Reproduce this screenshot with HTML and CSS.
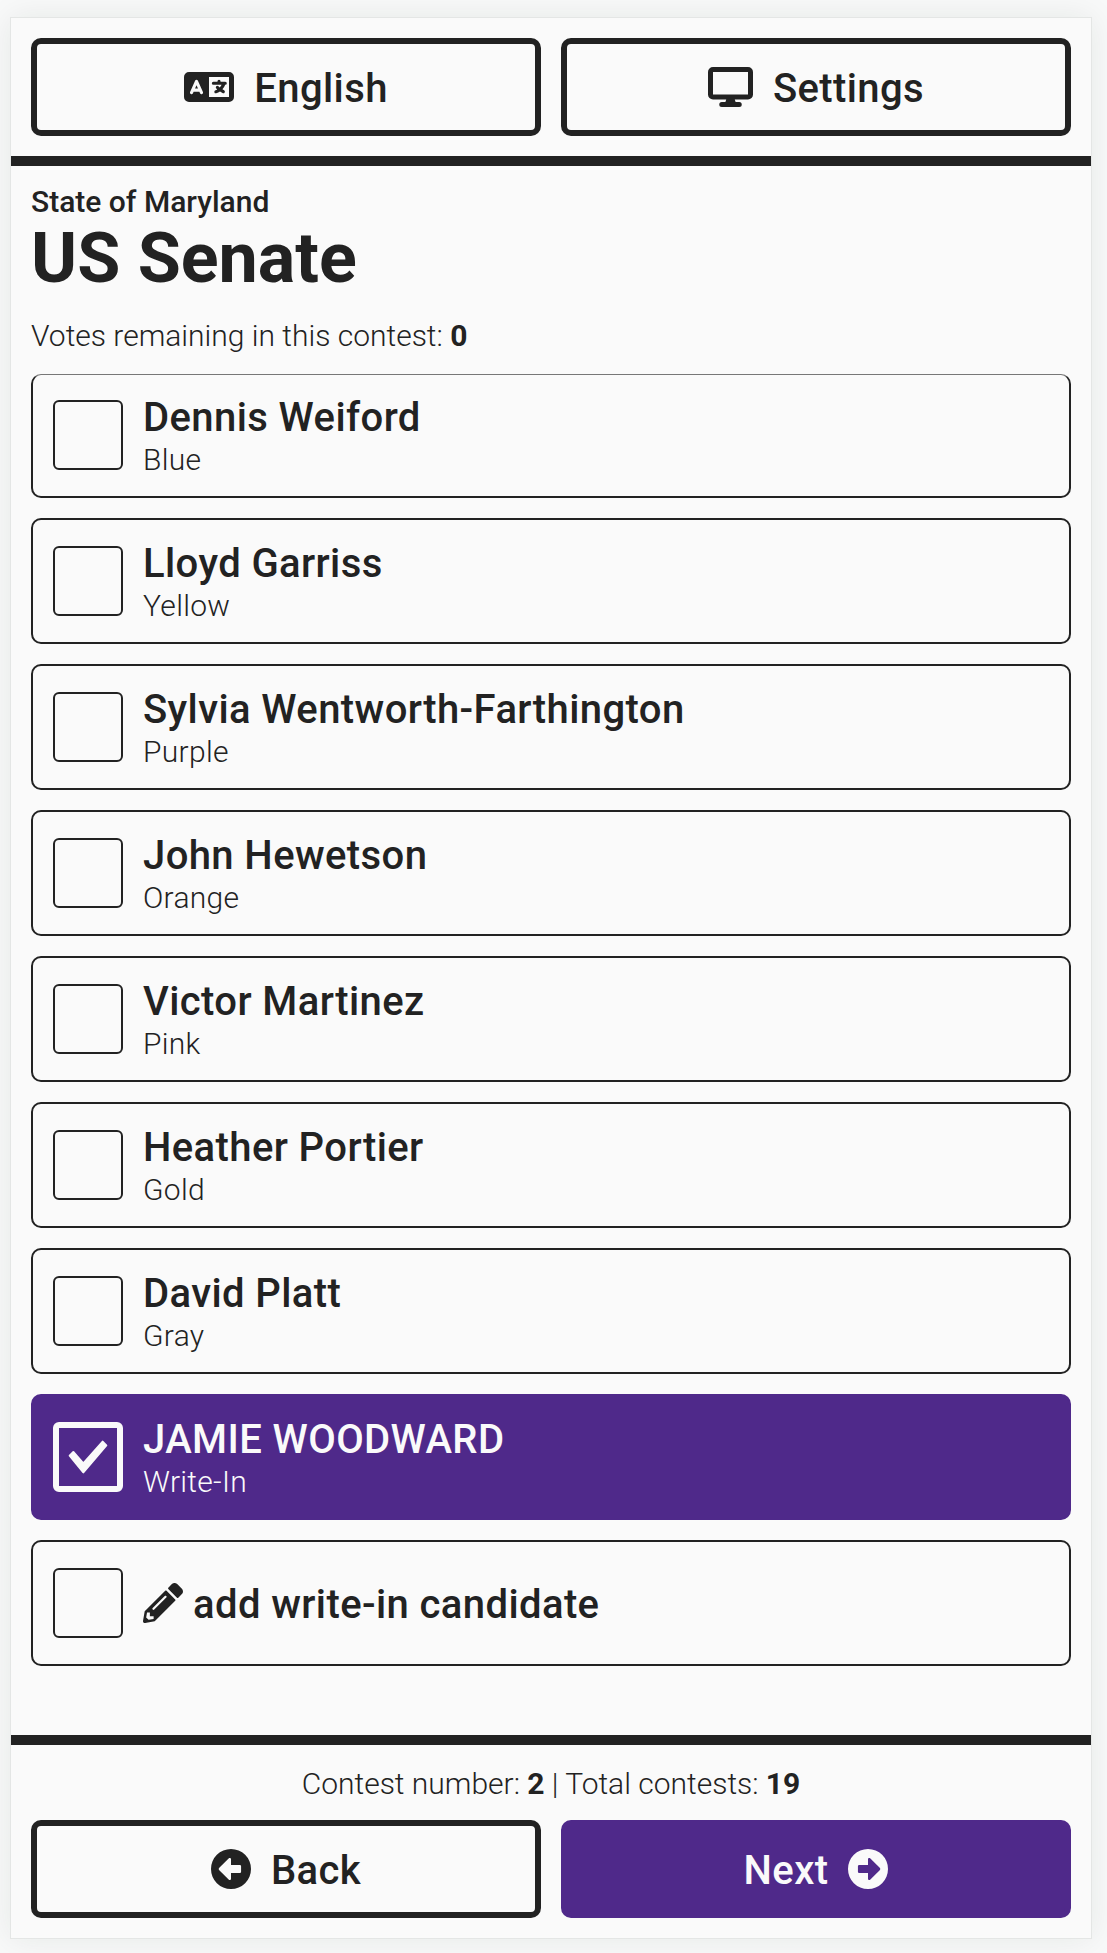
FILE: index.html
```html
<!DOCTYPE html>
<html lang="en">
<head>
<meta charset="utf-8">
<title>US Senate</title>
<link rel="stylesheet" href="styles.css">
</head>
<body>
<main class="screen">
  <header class="toolbar">
    <button class="btn"><svg class="icon icon-language" viewBox="0 0 640 512"><path fill-rule="evenodd" d="M64 64H576a64 64 0 0 1 64 64V384a64 64 0 0 1-64 64H64a64 64 0 0 1-64-64V128a64 64 0 0 1 64-64ZM320 128V384H576V128ZM178.300 175.900a20 20 0 0 0-36.600 0l-64 144a20 20 0 0 0 36.600 16.200l8.900-20.100h73.600l8.900 20.100a20 20 0 0 0 36.600-16.200ZM160 233.200 179 276h-38ZM448 164a20 20 0 0 1 20 20v4h60a20 20 0 0 1 0 40h-2l-1.600 4.500a158 158 0 0 1-32.400 52.500l21.400 13a20 20 0 0 1-20.600 34.300L461 312.700a153 153 0 0 1-47.800 23.600 20 20 0 0 1-10.300-38.700 113 113 0 0 0 22.400-9.300l-12.200-12.200a20 20 0 0 1 28.300-28.300l14.600 14.600a118 118 0 0 0 25-34.400H376a20 20 0 0 1 0-40h52v-4a20 20 0 0 1 20-20Z"/></svg><span>English</span></button>
    <button class="btn"><svg class="icon icon-display" viewBox="0 0 576 512"><path fill-rule="evenodd" d="M64 0H512a64 64 0 0 1 64 64V352a64 64 0 0 1-64 64H342.600l10.700 32H400a32 32 0 0 1 0 64H176a32 32 0 0 1 0-64h46.700l10.700-32H64A64 64 0 0 1 0 352V64A64 64 0 0 1 64 0ZM64 64V352H512V64Z"/></svg><span>Settings</span></button>
  </header>
  <section class="contest">
    <div class="district">State of Maryland</div>
    <h1 class="title">US Senate</h1>
    <p class="caption">Votes remaining in this contest: <b>0</b></p>
  </section>
  <div class="choices">
    <div class="choice"><span class="box"></span><div><div class="name">Dennis Weiford</div><div class="party">Blue</div></div></div>
    <div class="choice"><span class="box"></span><div><div class="name">Lloyd Garriss</div><div class="party">Yellow</div></div></div>
    <div class="choice"><span class="box"></span><div><div class="name">Sylvia Wentworth-Farthington</div><div class="party">Purple</div></div></div>
    <div class="choice"><span class="box"></span><div><div class="name">John Hewetson</div><div class="party">Orange</div></div></div>
    <div class="choice"><span class="box"></span><div><div class="name">Victor Martinez</div><div class="party">Pink</div></div></div>
    <div class="choice"><span class="box"></span><div><div class="name">Heather Portier</div><div class="party">Gold</div></div></div>
    <div class="choice"><span class="box"></span><div><div class="name">David Platt</div><div class="party">Gray</div></div></div>
    <div class="choice selected"><span class="box"><svg class="check" viewBox="0 0 120 102"><path d="M5 47 16 36 46 70 104 5 115 16 46 97Z"/></svg></span><div><div class="name">JAMIE WOODWARD</div><div class="party">Write-In</div></div></div>
    <div class="choice"><span class="box"></span><div class="name add"><svg class="icon" viewBox="0 0 512 512"><path fill-rule="evenodd" d="M497.900 142.100l-46.100 46.100c-4.700 4.700-12.300 4.700-17 0l-111-111c-4.700-4.700-4.700-12.300 0-17l46.100-46.100c18.700-18.700 49.100-18.700 67.900 0l60.100 60.100c18.800 18.700 18.800 49.100 0 67.900zM284.200 99.800L21.600 362.400.4 483.900c-2.900 16.400 11.400 30.600 27.800 27.800l121.500-21.300 262.600-262.600c4.700-4.700 4.700-12.300 0-17l-111-111c-4.800-4.700-12.400-4.700-17.100 0zM124.100 339.900c-5.500-5.500-5.500-14.300 0-19.800l154-154c5.500-5.500 14.300-5.500 19.800 0s5.500 14.300 0 19.800l-154 154c-5.500 5.500-14.300 5.500-19.800 0zM88 424h48v36.300l-64.500 11.300-31.100-31.100L51.700 376H88v48z"/></svg><span>add write-in candidate</span></div></div>
  </div>
  <footer class="footer">
    <p class="caption progress">Contest number: <b>2</b> | Total contests: <b>19</b></p>
    <div class="nav">
      <button class="btn"><svg class="icon" viewBox="0 0 512 512"><path fill-rule="evenodd" d="M512 256A256 256 0 1 0 0 256a256 256 0 1 0 512 0zM256 130v74h113a16 16 0 0 1 16 16v72a16 16 0 0 1-16 16H256v74c0 14-17 21-27 11L106 273c-9-9-9-25 0-34L229 119c10-10 27-3 27 11z"/></svg><span>Back</span></button>
      <button class="btn primary"><span>Next</span><svg class="icon" viewBox="0 0 512 512"><path fill-rule="evenodd" transform="matrix(-1 0 0 1 512 0)" d="M512 256A256 256 0 1 0 0 256a256 256 0 1 0 512 0zM256 130v74h113a16 16 0 0 1 16 16v72a16 16 0 0 1-16 16H256v74c0 14-17 21-27 11L106 273c-9-9-9-25 0-34L229 119c10-10 27-3 27 11z"/></svg></button>
    </div>
  </footer>
</main>
</body>
</html>
```
FILE: styles.css
```css
* { box-sizing: border-box; }
body {
  margin: 0;
  padding: 17px 0 0 10px;
  height: 1953px;
  overflow: hidden;
  background: #f8f9f9;
  font-family: Roboto, "Liberation Sans", sans-serif;
  color: #222;
}
.screen {
  width: 1082px;
  height: 1922px;
  display: flex;
  flex-direction: column;
  background: #fafafa;
  border: 1px solid #e4e6e5;
  box-shadow: 0 0 30px rgba(0, 40, 30, 0.08);
}
.toolbar {
  display: grid;
  grid-template-columns: 1fr 1fr;
  gap: 20px;
  padding: 20px;
  border-bottom: 10px solid #222;
}
.btn {
  height: 98px;
  display: flex;
  align-items: center;
  justify-content: center;
  gap: 20px;
  padding: 0;
  border: 6px solid #222;
  border-radius: 10px;
  background: #fafafa;
  color: #222;
  font: 500 40px/48px Roboto, "Liberation Sans", sans-serif;
  letter-spacing: 0.01em;
}
.btn span, .add span { padding-top: 3px; }
.btn.primary { background: #4f298a; border-color: #4f298a; color: #fafafa; }
.icon { width: 40px; height: 40px; fill: currentColor; flex: none; }
.icon-language { width: 50px; }
.icon-display { width: 45px; }
.contest { padding: 18px 20px 0; }
.district { font-size: 30px; line-height: 35px; font-weight: 500; }
.title { margin: 0; font-size: 70px; line-height: 78px; font-weight: 700; }
.caption { margin: 21px 0 0; font-size: 30px; line-height: 36px; font-weight: 300; }
.caption b { font-weight: 700; }
.choices { padding: 0 20px; margin-top: 18px; display: flex; flex-direction: column; gap: 20px; }
.choice {
  height: 126px;
  display: flex;
  align-items: center;
  gap: 20px;
  padding: 0 20px;
  border: 2px solid #222;
  border-radius: 10px;
}
.choice:first-child { height: 124px; margin-top: 2px; border-top: 1px solid #777; padding-bottom: 1px; }
.box {
  width: 70px;
  height: 70px;
  border: 2px solid #222;
  border-radius: 6px;
  display: flex;
  align-items: center;
  justify-content: center;
}
.name { font-size: 40px; line-height: 49px; font-weight: 500; letter-spacing: 0.01em; }
.party { font-size: 30px; line-height: 36px; font-weight: 300; letter-spacing: 0.01em; }
.add { display: flex; align-items: center; gap: 10px; }
.selected { background: #4f298a; border-color: #4f298a; color: #fafafa; }
.selected .box { border: 6px solid #fafafa; }
.check { width: 40px; height: 34px; fill: #fafafa; stroke: #fafafa; stroke-width: 6; stroke-linejoin: round; }
.footer { margin-top: auto; border-top: 10px solid #222; padding: 0 20px 20px; }
.progress { text-align: center; }
.nav { margin-top: 18px; display: grid; grid-template-columns: 1fr 1fr; gap: 20px; }
```
